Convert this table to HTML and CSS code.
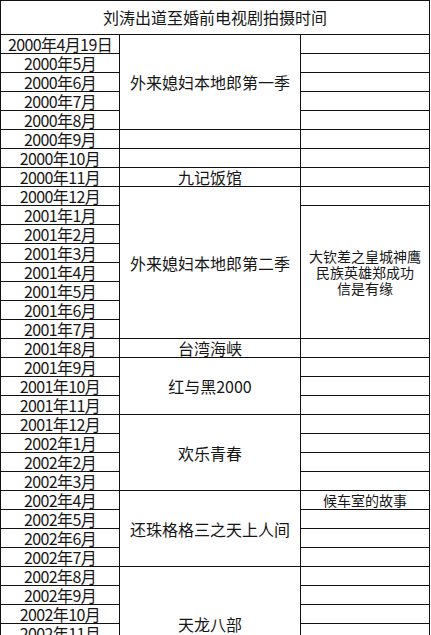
FILE: index.html
```html
<!DOCTYPE html>
<html lang="zh-CN">
<head>
<meta charset="utf-8">
<title>刘涛出道至婚前电视剧拍摄时间</title>
<link rel="stylesheet" href="styles.css">
</head>
<body>
<table class="sheet">
  <colgroup>
    <col class="c-date">
    <col class="c-main">
    <col class="c-side">
  </colgroup>
  <thead>
    <tr class="title-row"><th colspan="3">刘涛出道至婚前电视剧拍摄时间</th></tr>
  </thead>
  <tbody>
    <tr><td class="date">2000年4月19日</td><td class="show" rowspan="5">外来媳妇本地郎第一季</td><td></td></tr>
    <tr><td class="date">2000年5月</td><td></td></tr>
    <tr><td class="date">2000年6月</td><td></td></tr>
    <tr><td class="date">2000年7月</td><td></td></tr>
    <tr><td class="date">2000年8月</td><td></td></tr>
    <tr><td class="date">2000年9月</td><td></td><td></td></tr>
    <tr><td class="date">2000年10月</td><td></td><td></td></tr>
    <tr><td class="date">2000年11月</td><td class="show">九记饭馆</td><td></td></tr>
    <tr><td class="date">2000年12月</td><td class="show" rowspan="8">外来媳妇本地郎第二季</td><td></td></tr>
    <tr><td class="date">2001年1月</td><td class="side multi" rowspan="7">大钦差之皇城神鹰<br>民族英雄郑成功<br>信是有缘</td></tr>
    <tr><td class="date">2001年2月</td></tr>
    <tr><td class="date">2001年3月</td></tr>
    <tr><td class="date">2001年4月</td></tr>
    <tr><td class="date">2001年5月</td></tr>
    <tr><td class="date">2001年6月</td></tr>
    <tr><td class="date">2001年7月</td></tr>
    <tr><td class="date">2001年8月</td><td class="show">台湾海峡</td><td></td></tr>
    <tr><td class="date">2001年9月</td><td class="show" rowspan="3">红与黑2000</td><td></td></tr>
    <tr><td class="date">2001年10月</td><td></td></tr>
    <tr><td class="date">2001年11月</td><td></td></tr>
    <tr><td class="date">2001年12月</td><td class="show" rowspan="4">欢乐青春</td><td></td></tr>
    <tr><td class="date">2002年1月</td><td></td></tr>
    <tr><td class="date">2002年2月</td><td></td></tr>
    <tr><td class="date">2002年3月</td><td></td></tr>
    <tr><td class="date">2002年4月</td><td class="show" rowspan="4">还珠格格三之天上人间</td><td class="side">候车室的故事</td></tr>
    <tr><td class="date">2002年5月</td><td></td></tr>
    <tr><td class="date">2002年6月</td><td></td></tr>
    <tr><td class="date">2002年7月</td><td></td></tr>
    <tr><td class="date">2002年8月</td><td class="show" rowspan="6">天龙八部</td><td></td></tr>
    <tr><td class="date">2002年9月</td><td></td></tr>
    <tr><td class="date">2002年10月</td><td></td></tr>
    <tr><td class="date">2002年11月</td><td></td></tr>
    <tr><td class="date">2002年12月</td><td></td></tr>
    <tr><td class="date">2003年1月</td><td></td></tr>
  </tbody>
</table>
</body>
</html>
```

FILE: styles.css
```css
html, body {
  margin: 0;
  padding: 0;
  background: #ffffff;
}

body {
  font-family: "Noto Sans CJK SC", "Liberation Sans", sans-serif;
  font-size: 16px;
  color: #161616;
}

.sheet {
  border-collapse: collapse;
  table-layout: fixed;
  width: 429px;
}

.c-date { width: 119px; }
.c-main { width: 181px; }
.c-side { width: 129px; }

.sheet th,
.sheet td {
  border: 1px solid #111;
  padding: 0;
  text-align: center;
  vertical-align: middle;
  white-space: nowrap;
}

.title-row th {
  height: 33px;
  font-weight: normal;
  font-size: 16px;
  line-height: 33px;
}

.sheet td {
  height: 18px;
  line-height: 18px;
}

.date {
  letter-spacing: -0.6px;
}

.sheet td.side {
  font-size: 14px;
}

.sheet td.multi {
  line-height: 16px;
}
```
